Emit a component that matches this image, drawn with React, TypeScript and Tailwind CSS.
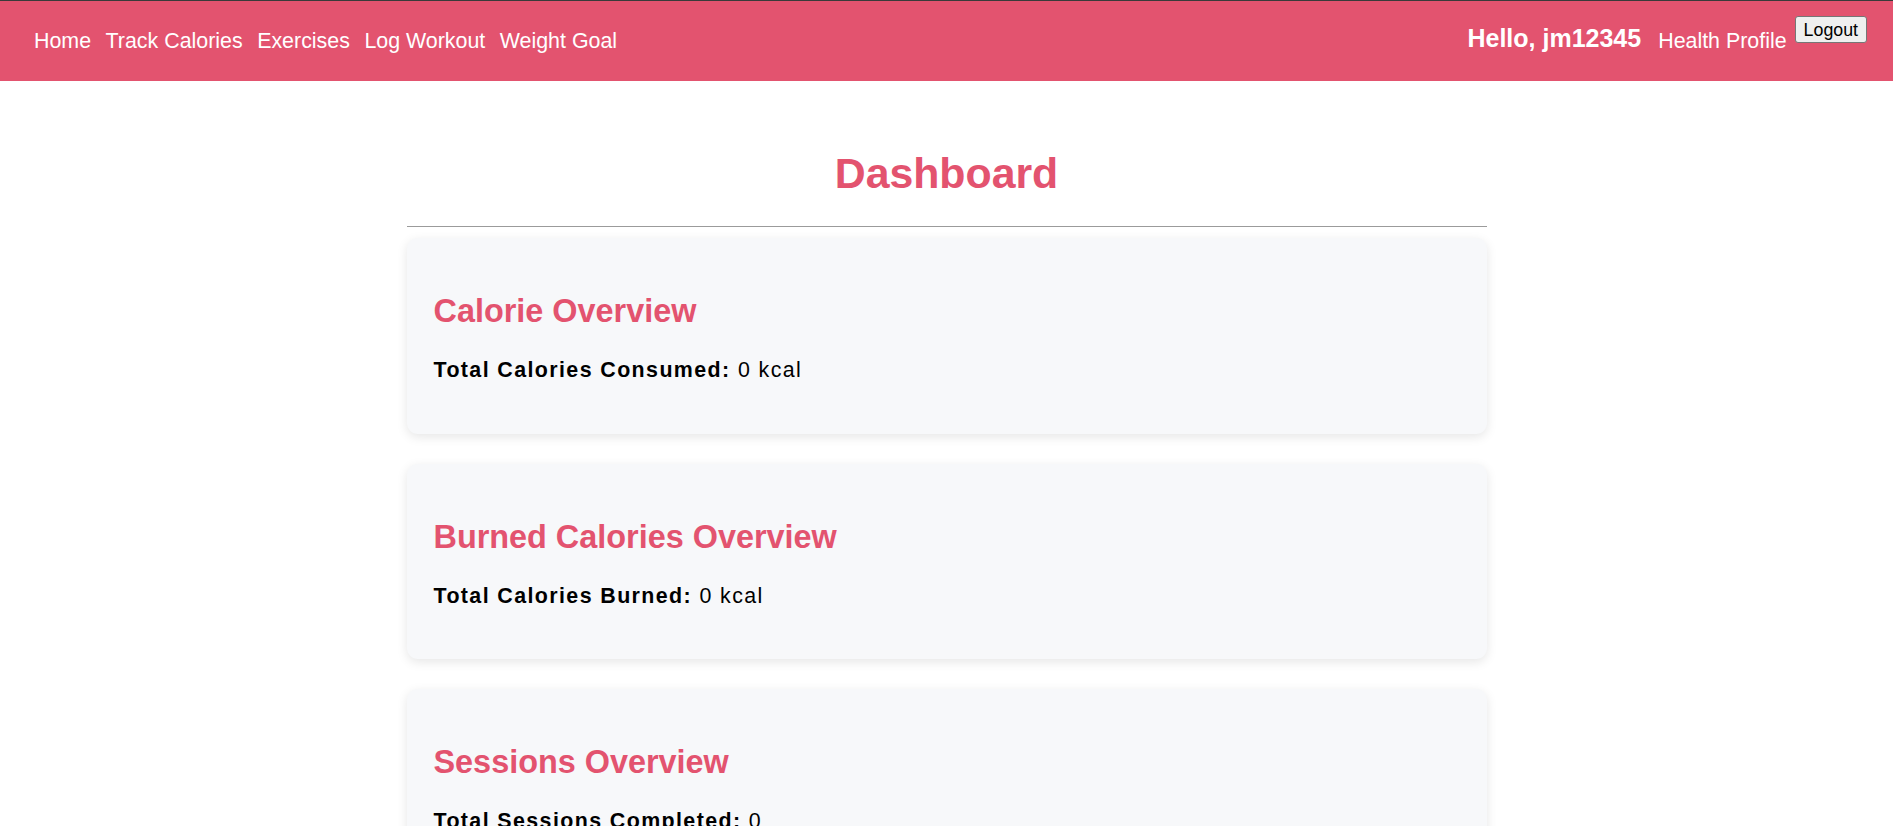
import React from 'react';

const NAV_LINKS = ['Home', 'Track Calories', 'Exercises', 'Log Workout', 'Weight Goal'];

type Overview = { title: string; label: string; value: string };

const OVERVIEWS: Overview[] = [
    { title: 'Calorie Overview', label: 'Total Calories Consumed:', value: '0 kcal' },
    { title: 'Burned Calories Overview', label: 'Total Calories Burned:', value: '0 kcal' },
    { title: 'Sessions Overview', label: 'Total Sessions Completed:', value: '0' },
];

const Header: React.FC<{ username: string }> = ({ username }) => (
    <header className="h-[81px] border-t border-[#3a3a3a] bg-[#e3536f] flex items-stretch justify-between pl-[34px] pr-[26px]">
        <nav className="flex items-center gap-[14.5px]">
            {NAV_LINKS.map((link) => (
                <a key={link} href="#" className="text-white text-[21.4px] leading-[24.6px] whitespace-nowrap">
                    {link}
                </a>
            ))}
        </nav>
        <div className="flex items-center">
            <h3 className="text-white text-[25px] font-bold leading-[29px] mr-[17px] mb-[5px] whitespace-nowrap">
                Hello, {username}
            </h3>
            <a href="#" className="text-white text-[21.4px] leading-[24.6px] mr-[8px] whitespace-nowrap">
                Health Profile
            </a>
            <button className="self-start mt-[15px] h-[27px] px-[8px] bg-[#efefef] border border-[#767676] rounded-[3px] text-black text-[17.8px] leading-[20px]">
                Logout
            </button>
        </div>
    </header>
);

const OverviewCard: React.FC<Overview> = ({ title, label, value }) => (
    <div className="bg-[#f7f8fa] rounded-[11px] shadow-[0_3px_11px_rgba(0,0,0,0.1)] px-[27px] pt-[55px] pb-[51px]">
        <h2 className="text-[#e3536f] text-[32.4px] font-bold leading-[37px] mb-[28px]">{title}</h2>
        <p className="text-black text-[21.4px] leading-[24.6px] tracking-[1.4px]">
            <strong className="font-bold">{label}</strong> {value}
        </p>
    </div>
);

export default function App() {
    return (
        <div className="min-h-screen bg-white font-['Liberation_Sans',Arial,sans-serif]">
            <Header username="jm12345" />
            <main className="w-[1080px] mx-auto">
                <div className="pt-[68px] pb-[28px] border-b border-[#9b9b9b]">
                    <h1 className="text-center text-[#e3536f] text-[42.8px] font-bold leading-[49px]">Dashboard</h1>
                </div>
                <div className="flex flex-col gap-[30px] mt-[11px] pb-[30px]">
                    {OVERVIEWS.map((o) => (
                        <OverviewCard key={o.title} {...o} />
                    ))}
                </div>
            </main>
        </div>
    );
}
